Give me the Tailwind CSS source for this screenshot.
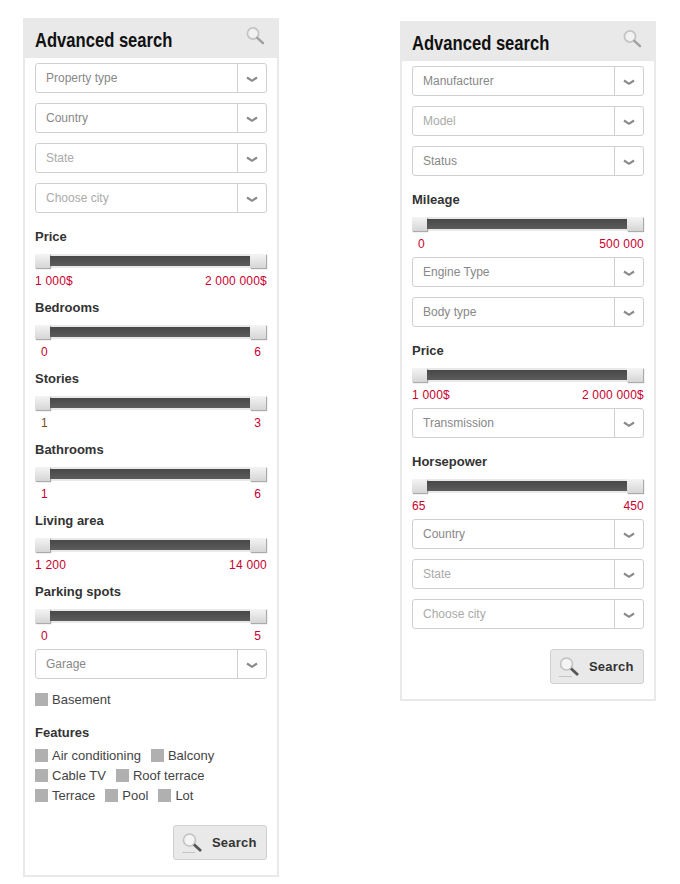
<!DOCTYPE html>
<html lang="en">
<head>
<meta charset="utf-8">
<title>Advanced search</title>
<script src="https://cdn.jsdelivr.net/npm/@tailwindcss/browser@4"></script>
</head>
<body class="bg-white font-['Liberation_Sans',Arial,sans-serif]">
<div class="flex items-start w-[680px] h-[884px] overflow-hidden">

<!-- left panel -->
<div class="w-[256px] ml-[23px] mt-[18px] border-2 border-[#e9e9e9] border-t-0 pb-[15px]">
  <div class="h-[40px] -mx-[2px] bg-[#e9e9e9] pl-[12px] pr-[14px] flex justify-between">
    <h2 class="origin-left scale-x-[0.79] whitespace-nowrap font-bold text-[21px] leading-[44px] text-[#111]">Advanced search</h2>
    <svg class="w-[20px] h-[20px] mt-[8px]" viewBox="0 0 20 20" fill="none"><circle cx="8" cy="7.5" r="5.6" stroke="#c4c4c4" stroke-width="1.8" fill="#f2f2f2"/><path d="M12.3 11.8 18 17.2" stroke="#a0a0a0" stroke-width="2.4" stroke-linecap="round"/></svg>
  </div>
  <div class="px-[10px] pt-[5px]">
    <div class="flex flex-col gap-[10px]">
      <div class="h-[30px] flex border border-[#d0d0d0] rounded-[3px] bg-white"><span class="flex-1 pl-[10px] text-[12px] leading-[28px] text-[#888]">Property type</span><span class="w-[29px] border-l border-[#d0d0d0] flex items-center justify-center"><svg class="w-[12px] h-[7px] mt-[2px]" viewBox="0 0 12 7" fill="none"><path d="M1 1.5 6 4.8 11 1.5" stroke="#8a8a8a" stroke-width="2.2"/></svg></span></div>
      <div class="h-[30px] flex border border-[#d0d0d0] rounded-[3px] bg-white"><span class="flex-1 pl-[10px] text-[12px] leading-[28px] text-[#888]">Country</span><span class="w-[29px] border-l border-[#d0d0d0] flex items-center justify-center"><svg class="w-[12px] h-[7px] mt-[2px]" viewBox="0 0 12 7" fill="none"><path d="M1 1.5 6 4.8 11 1.5" stroke="#8a8a8a" stroke-width="2.2"/></svg></span></div>
      <div class="h-[30px] flex border border-[#d0d0d0] rounded-[3px] bg-white"><span class="flex-1 pl-[10px] text-[12px] leading-[28px] text-[#aaa]">State</span><span class="w-[29px] border-l border-[#d0d0d0] flex items-center justify-center"><svg class="w-[12px] h-[7px] mt-[2px]" viewBox="0 0 12 7" fill="none"><path d="M1 1.5 6 4.8 11 1.5" stroke="#8a8a8a" stroke-width="2.2"/></svg></span></div>
      <div class="h-[30px] flex border border-[#d0d0d0] rounded-[3px] bg-white"><span class="flex-1 pl-[10px] text-[12px] leading-[28px] text-[#aaa]">Choose city</span><span class="w-[29px] border-l border-[#d0d0d0] flex items-center justify-center"><svg class="w-[12px] h-[7px] mt-[2px]" viewBox="0 0 12 7" fill="none"><path d="M1 1.5 6 4.8 11 1.5" stroke="#8a8a8a" stroke-width="2.2"/></svg></span></div>
    </div>

    <div class="mt-[13px]">
      <div class="h-[20px] text-[13px] font-bold leading-[22px] text-[#333]">Price</div>
      <div class="mt-[8px] h-[14px] bg-[#e9e9e9] flex justify-between items-center"><span class="w-[15px] h-[14px] bg-gradient-to-b from-[#f4f4f4] to-[#d6d6d6] shadow-[1px_1px_1px_#aaa]"></span><span class="flex-1 h-[10px] bg-gradient-to-b from-[#484848] to-[#5c5c5c]"></span><span class="w-[16px] mr-[1px] h-[14px] bg-gradient-to-b from-[#f4f4f4] to-[#d6d6d6] shadow-[1px_1px_1px_#aaa]"></span></div>
      <div class="mt-[5px] h-[16px] flex justify-between text-[12px] tracking-[0.2px] leading-[16px] text-[#c8002d]"><span>1 000$</span><span>2 000 000$</span></div>
    </div>
    <div class="mt-[8px]">
      <div class="h-[20px] text-[13px] font-bold leading-[22px] text-[#333]">Bedrooms</div>
      <div class="mt-[8px] h-[14px] bg-[#e9e9e9] flex justify-between items-center"><span class="w-[15px] h-[14px] bg-gradient-to-b from-[#f4f4f4] to-[#d6d6d6] shadow-[1px_1px_1px_#aaa]"></span><span class="flex-1 h-[10px] bg-gradient-to-b from-[#484848] to-[#5c5c5c]"></span><span class="w-[16px] mr-[1px] h-[14px] bg-gradient-to-b from-[#f4f4f4] to-[#d6d6d6] shadow-[1px_1px_1px_#aaa]"></span></div>
      <div class="mt-[5px] h-[16px] px-[6px] flex justify-between text-[12px] tracking-[0.2px] leading-[16px] text-[#c8002d]"><span>0</span><span>6</span></div>
    </div>
    <div class="mt-[8px]">
      <div class="h-[20px] text-[13px] font-bold leading-[22px] text-[#333]">Stories</div>
      <div class="mt-[8px] h-[14px] bg-[#e9e9e9] flex justify-between items-center"><span class="w-[15px] h-[14px] bg-gradient-to-b from-[#f4f4f4] to-[#d6d6d6] shadow-[1px_1px_1px_#aaa]"></span><span class="flex-1 h-[10px] bg-gradient-to-b from-[#484848] to-[#5c5c5c]"></span><span class="w-[16px] mr-[1px] h-[14px] bg-gradient-to-b from-[#f4f4f4] to-[#d6d6d6] shadow-[1px_1px_1px_#aaa]"></span></div>
      <div class="mt-[5px] h-[16px] px-[6px] flex justify-between text-[12px] tracking-[0.2px] leading-[16px] text-[#c8002d]"><span class="text-[#7a4a10]">1</span><span>3</span></div>
    </div>
    <div class="mt-[8px]">
      <div class="h-[20px] text-[13px] font-bold leading-[22px] text-[#333]">Bathrooms</div>
      <div class="mt-[8px] h-[14px] bg-[#e9e9e9] flex justify-between items-center"><span class="w-[15px] h-[14px] bg-gradient-to-b from-[#f4f4f4] to-[#d6d6d6] shadow-[1px_1px_1px_#aaa]"></span><span class="flex-1 h-[10px] bg-gradient-to-b from-[#484848] to-[#5c5c5c]"></span><span class="w-[16px] mr-[1px] h-[14px] bg-gradient-to-b from-[#f4f4f4] to-[#d6d6d6] shadow-[1px_1px_1px_#aaa]"></span></div>
      <div class="mt-[5px] h-[16px] px-[6px] flex justify-between text-[12px] tracking-[0.2px] leading-[16px] text-[#c8002d]"><span>1</span><span>6</span></div>
    </div>
    <div class="mt-[8px]">
      <div class="h-[20px] text-[13px] font-bold leading-[22px] text-[#333]">Living area</div>
      <div class="mt-[8px] h-[14px] bg-[#e9e9e9] flex justify-between items-center"><span class="w-[15px] h-[14px] bg-gradient-to-b from-[#f4f4f4] to-[#d6d6d6] shadow-[1px_1px_1px_#aaa]"></span><span class="flex-1 h-[10px] bg-gradient-to-b from-[#484848] to-[#5c5c5c]"></span><span class="w-[16px] mr-[1px] h-[14px] bg-gradient-to-b from-[#f4f4f4] to-[#d6d6d6] shadow-[1px_1px_1px_#aaa]"></span></div>
      <div class="mt-[5px] h-[16px] flex justify-between text-[12px] tracking-[0.2px] leading-[16px] text-[#c8002d]"><span>1 200</span><span>14 000</span></div>
    </div>
    <div class="mt-[8px]">
      <div class="h-[20px] text-[13px] font-bold leading-[22px] text-[#333]">Parking spots</div>
      <div class="mt-[8px] h-[14px] bg-[#e9e9e9] flex justify-between items-center"><span class="w-[15px] h-[14px] bg-gradient-to-b from-[#f4f4f4] to-[#d6d6d6] shadow-[1px_1px_1px_#aaa]"></span><span class="flex-1 h-[10px] bg-gradient-to-b from-[#484848] to-[#5c5c5c]"></span><span class="w-[16px] mr-[1px] h-[14px] bg-gradient-to-b from-[#f4f4f4] to-[#d6d6d6] shadow-[1px_1px_1px_#aaa]"></span></div>
      <div class="mt-[5px] h-[16px] px-[6px] flex justify-between text-[12px] tracking-[0.2px] leading-[16px] text-[#c8002d]"><span>0</span><span>5</span></div>
    </div>

    <div class="mt-[5px] h-[30px] flex border border-[#d0d0d0] rounded-[3px] bg-white"><span class="flex-1 pl-[10px] text-[12px] leading-[28px] text-[#888]">Garage</span><span class="w-[29px] border-l border-[#d0d0d0] flex items-center justify-center"><svg class="w-[12px] h-[7px] mt-[2px]" viewBox="0 0 12 7" fill="none"><path d="M1 1.5 6 4.8 11 1.5" stroke="#8a8a8a" stroke-width="2.2"/></svg></span></div>

    <div class="mt-[10px] h-[20px] flex items-start gap-[4px] text-[13px] leading-[22px] text-[#444]"><span class="w-[13px] h-[13px] mt-[4px] bg-[#b0b0b0]"></span>Basement</div>

    <div class="mt-[13px] h-[20px] text-[13px] font-bold leading-[22px] text-[#333]">Features</div>
    <div class="mt-[3px] text-[13px] leading-[22px] text-[#444]">
      <div class="h-[20px] flex items-start"><span class="w-[13px] h-[13px] mt-[4px] bg-[#b0b0b0] mr-[4px]"></span>Air conditioning<span class="w-[13px] h-[13px] mt-[4px] bg-[#b0b0b0] ml-[10px] mr-[4px]"></span>Balcony</div>
      <div class="h-[20px] flex items-start"><span class="w-[13px] h-[13px] mt-[4px] bg-[#b0b0b0] mr-[4px]"></span>Cable TV<span class="w-[13px] h-[13px] mt-[4px] bg-[#b0b0b0] ml-[10px] mr-[4px]"></span>Roof terrace</div>
      <div class="h-[20px] flex items-start"><span class="w-[13px] h-[13px] mt-[4px] bg-[#b0b0b0] mr-[4px]"></span>Terrace<span class="w-[13px] h-[13px] mt-[4px] bg-[#b0b0b0] ml-[10px] mr-[4px]"></span>Pool<span class="w-[13px] h-[13px] mt-[4px] bg-[#b0b0b0] ml-[10px] mr-[4px]"></span>Lot</div>
    </div>

    <div class="mt-[20px] flex justify-end">
      <button class="w-[94px] h-[35px] border border-[#d0d0d0] rounded-[3px] bg-[#e9e9e9] flex items-center pl-[7px] text-[13px] font-bold tracking-[0.2px] text-[#333]"><svg class="w-[22px] h-[22px] mr-[9px]" viewBox="0 0 22 22" fill="none"><circle cx="8.5" cy="8" r="6" stroke="#c2c2c2" stroke-width="1.6" fill="#f4f4f4"/><path d="M13 12.5 20 19" stroke="#555" stroke-width="2.8"/><path d="M1 20.5H14" stroke="#c4c4c4" stroke-width="1"/></svg>Search</button>
    </div>
  </div>
</div>

<!-- right panel -->
<div class="w-[256px] ml-[121px] mt-[21px] border-2 border-[#e9e9e9] border-t-0 pb-[15px]">
  <div class="h-[40px] -mx-[2px] bg-[#e9e9e9] pl-[12px] pr-[14px] flex justify-between">
    <h2 class="origin-left scale-x-[0.79] whitespace-nowrap font-bold text-[21px] leading-[44px] text-[#111]">Advanced search</h2>
    <svg class="w-[20px] h-[20px] mt-[8px]" viewBox="0 0 20 20" fill="none"><circle cx="8" cy="7.5" r="5.6" stroke="#c4c4c4" stroke-width="1.8" fill="#f2f2f2"/><path d="M12.3 11.8 18 17.2" stroke="#a0a0a0" stroke-width="2.4" stroke-linecap="round"/></svg>
  </div>
  <div class="px-[10px] pt-[5px]">
    <div class="flex flex-col gap-[10px]">
      <div class="h-[30px] flex border border-[#d0d0d0] rounded-[3px] bg-white"><span class="flex-1 pl-[10px] text-[12px] leading-[28px] text-[#888]">Manufacturer</span><span class="w-[29px] border-l border-[#d0d0d0] flex items-center justify-center"><svg class="w-[12px] h-[7px] mt-[2px]" viewBox="0 0 12 7" fill="none"><path d="M1 1.5 6 4.8 11 1.5" stroke="#8a8a8a" stroke-width="2.2"/></svg></span></div>
      <div class="h-[30px] flex border border-[#d0d0d0] rounded-[3px] bg-white"><span class="flex-1 pl-[10px] text-[12px] leading-[28px] text-[#aaa]">Model</span><span class="w-[29px] border-l border-[#d0d0d0] flex items-center justify-center"><svg class="w-[12px] h-[7px] mt-[2px]" viewBox="0 0 12 7" fill="none"><path d="M1 1.5 6 4.8 11 1.5" stroke="#8a8a8a" stroke-width="2.2"/></svg></span></div>
      <div class="h-[30px] flex border border-[#d0d0d0] rounded-[3px] bg-white"><span class="flex-1 pl-[10px] text-[12px] leading-[28px] text-[#888]">Status</span><span class="w-[29px] border-l border-[#d0d0d0] flex items-center justify-center"><svg class="w-[12px] h-[7px] mt-[2px]" viewBox="0 0 12 7" fill="none"><path d="M1 1.5 6 4.8 11 1.5" stroke="#8a8a8a" stroke-width="2.2"/></svg></span></div>
    </div>

    <div class="mt-[13px]">
      <div class="h-[20px] text-[13px] font-bold leading-[22px] text-[#333]">Mileage</div>
      <div class="mt-[8px] h-[14px] bg-[#e9e9e9] flex justify-between items-center"><span class="w-[15px] h-[14px] bg-gradient-to-b from-[#f4f4f4] to-[#d6d6d6] shadow-[1px_1px_1px_#aaa]"></span><span class="flex-1 h-[10px] bg-gradient-to-b from-[#484848] to-[#5c5c5c]"></span><span class="w-[16px] mr-[1px] h-[14px] bg-gradient-to-b from-[#f4f4f4] to-[#d6d6d6] shadow-[1px_1px_1px_#aaa]"></span></div>
      <div class="mt-[5px] h-[16px] pl-[6px] flex justify-between text-[12px] tracking-[0.2px] leading-[16px] text-[#c8002d]"><span>0</span><span>500 000</span></div>
    </div>
    <div class="mt-[5px] flex flex-col gap-[10px]">
      <div class="h-[30px] flex border border-[#d0d0d0] rounded-[3px] bg-white"><span class="flex-1 pl-[10px] text-[12px] leading-[28px] text-[#888]">Engine Type</span><span class="w-[29px] border-l border-[#d0d0d0] flex items-center justify-center"><svg class="w-[12px] h-[7px] mt-[2px]" viewBox="0 0 12 7" fill="none"><path d="M1 1.5 6 4.8 11 1.5" stroke="#8a8a8a" stroke-width="2.2"/></svg></span></div>
      <div class="h-[30px] flex border border-[#d0d0d0] rounded-[3px] bg-white"><span class="flex-1 pl-[10px] text-[12px] leading-[28px] text-[#888]">Body type</span><span class="w-[29px] border-l border-[#d0d0d0] flex items-center justify-center"><svg class="w-[12px] h-[7px] mt-[2px]" viewBox="0 0 12 7" fill="none"><path d="M1 1.5 6 4.8 11 1.5" stroke="#8a8a8a" stroke-width="2.2"/></svg></span></div>
    </div>
    <div class="mt-[13px]">
      <div class="h-[20px] text-[13px] font-bold leading-[22px] text-[#333]">Price</div>
      <div class="mt-[8px] h-[14px] bg-[#e9e9e9] flex justify-between items-center"><span class="w-[15px] h-[14px] bg-gradient-to-b from-[#f4f4f4] to-[#d6d6d6] shadow-[1px_1px_1px_#aaa]"></span><span class="flex-1 h-[10px] bg-gradient-to-b from-[#484848] to-[#5c5c5c]"></span><span class="w-[16px] mr-[1px] h-[14px] bg-gradient-to-b from-[#f4f4f4] to-[#d6d6d6] shadow-[1px_1px_1px_#aaa]"></span></div>
      <div class="mt-[5px] h-[16px] flex justify-between text-[12px] tracking-[0.2px] leading-[16px] text-[#c8002d]"><span>1 000$</span><span>2 000 000$</span></div>
    </div>
    <div class="mt-[5px] h-[30px] flex border border-[#d0d0d0] rounded-[3px] bg-white"><span class="flex-1 pl-[10px] text-[12px] leading-[28px] text-[#888]">Transmission</span><span class="w-[29px] border-l border-[#d0d0d0] flex items-center justify-center"><svg class="w-[12px] h-[7px] mt-[2px]" viewBox="0 0 12 7" fill="none"><path d="M1 1.5 6 4.8 11 1.5" stroke="#8a8a8a" stroke-width="2.2"/></svg></span></div>
    <div class="mt-[13px]">
      <div class="h-[20px] text-[13px] font-bold leading-[22px] text-[#333]">Horsepower</div>
      <div class="mt-[8px] h-[14px] bg-[#e9e9e9] flex justify-between items-center"><span class="w-[15px] h-[14px] bg-gradient-to-b from-[#f4f4f4] to-[#d6d6d6] shadow-[1px_1px_1px_#aaa]"></span><span class="flex-1 h-[10px] bg-gradient-to-b from-[#484848] to-[#5c5c5c]"></span><span class="w-[16px] mr-[1px] h-[14px] bg-gradient-to-b from-[#f4f4f4] to-[#d6d6d6] shadow-[1px_1px_1px_#aaa]"></span></div>
      <div class="mt-[5px] h-[16px] flex justify-between text-[12px] tracking-[0.2px] leading-[16px] text-[#c8002d]"><span>65</span><span>450</span></div>
    </div>
    <div class="mt-[5px] flex flex-col gap-[10px]">
      <div class="h-[30px] flex border border-[#d0d0d0] rounded-[3px] bg-white"><span class="flex-1 pl-[10px] text-[12px] leading-[28px] text-[#888]">Country</span><span class="w-[29px] border-l border-[#d0d0d0] flex items-center justify-center"><svg class="w-[12px] h-[7px] mt-[2px]" viewBox="0 0 12 7" fill="none"><path d="M1 1.5 6 4.8 11 1.5" stroke="#8a8a8a" stroke-width="2.2"/></svg></span></div>
      <div class="h-[30px] flex border border-[#d0d0d0] rounded-[3px] bg-white"><span class="flex-1 pl-[10px] text-[12px] leading-[28px] text-[#aaa]">State</span><span class="w-[29px] border-l border-[#d0d0d0] flex items-center justify-center"><svg class="w-[12px] h-[7px] mt-[2px]" viewBox="0 0 12 7" fill="none"><path d="M1 1.5 6 4.8 11 1.5" stroke="#8a8a8a" stroke-width="2.2"/></svg></span></div>
      <div class="h-[30px] flex border border-[#d0d0d0] rounded-[3px] bg-white"><span class="flex-1 pl-[10px] text-[12px] leading-[28px] text-[#aaa]">Choose city</span><span class="w-[29px] border-l border-[#d0d0d0] flex items-center justify-center"><svg class="w-[12px] h-[7px] mt-[2px]" viewBox="0 0 12 7" fill="none"><path d="M1 1.5 6 4.8 11 1.5" stroke="#8a8a8a" stroke-width="2.2"/></svg></span></div>
    </div>
    <div class="mt-[20px] flex justify-end">
      <button class="w-[94px] h-[35px] border border-[#d0d0d0] rounded-[3px] bg-[#e9e9e9] flex items-center pl-[7px] text-[13px] font-bold tracking-[0.2px] text-[#333]"><svg class="w-[22px] h-[22px] mr-[9px]" viewBox="0 0 22 22" fill="none"><circle cx="8.5" cy="8" r="6" stroke="#c2c2c2" stroke-width="1.6" fill="#f4f4f4"/><path d="M13 12.5 20 19" stroke="#555" stroke-width="2.8"/><path d="M1 20.5H14" stroke="#c4c4c4" stroke-width="1"/></svg>Search</button>
    </div>
  </div>
</div>

</div>
</body>
</html>
